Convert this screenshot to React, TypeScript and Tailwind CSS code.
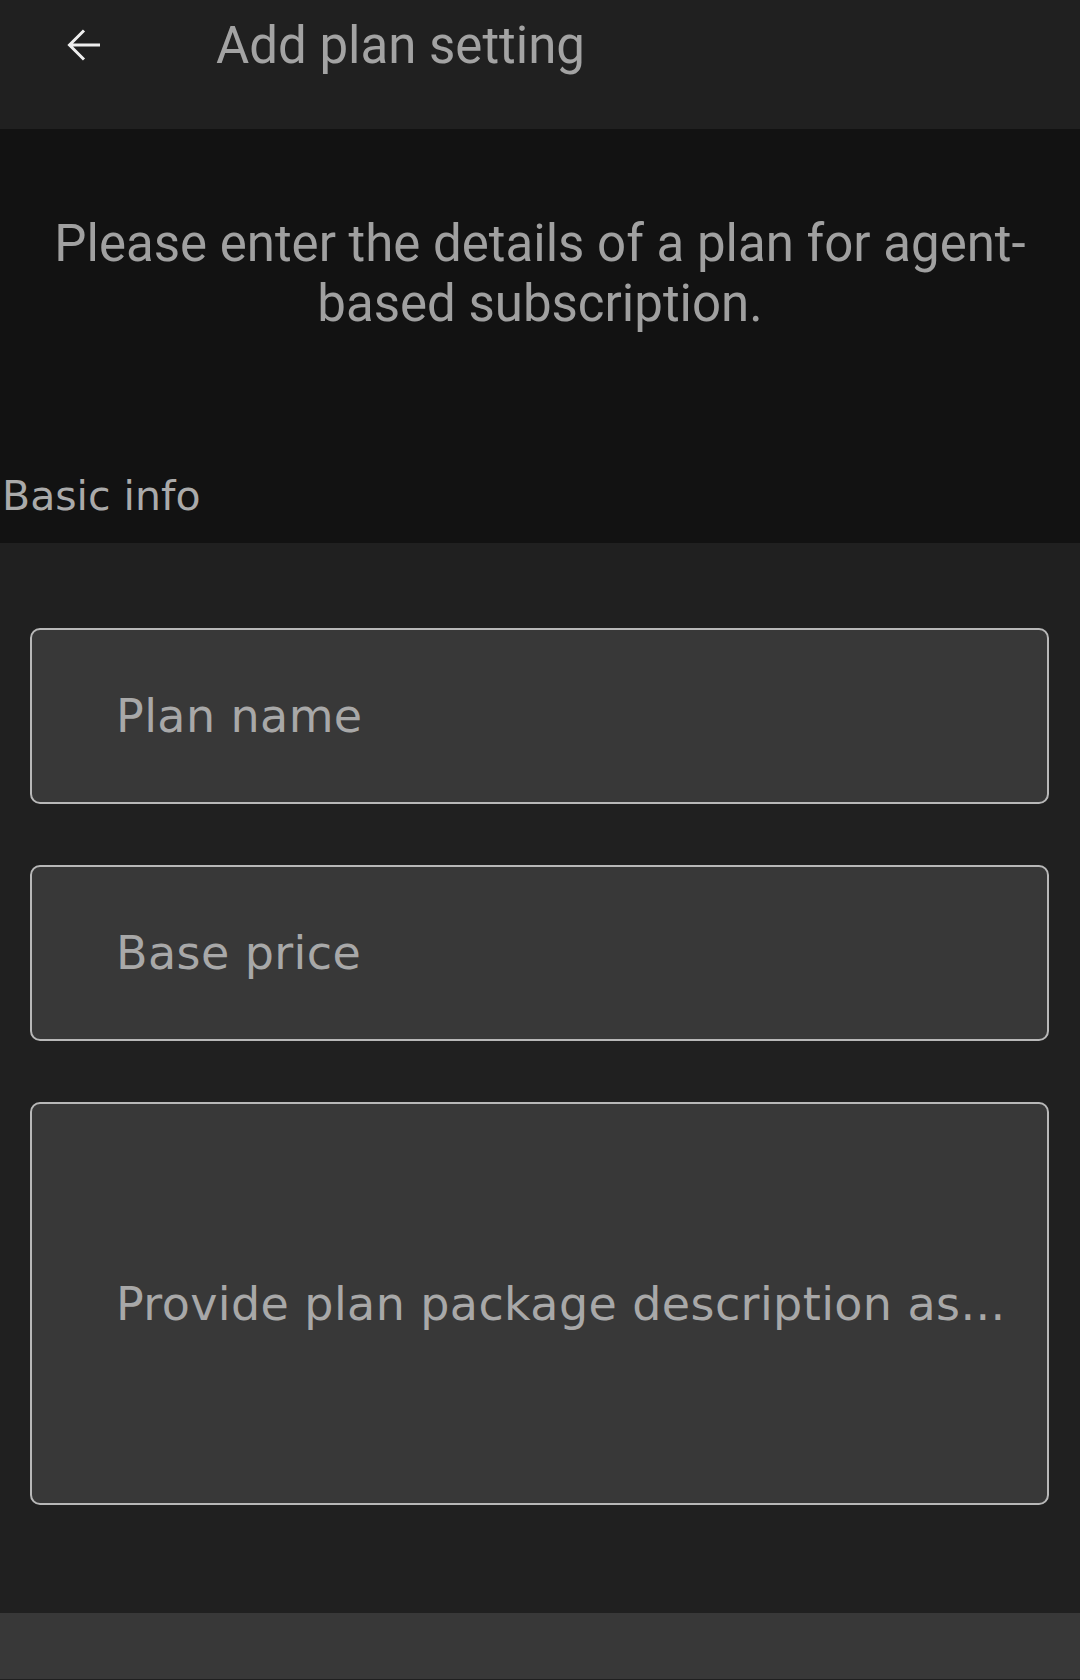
import React from "react";

const boxText = "font-['DejaVu_Sans',sans-serif] text-[46px] tracking-[0.4px] text-[#a8a8a8]";

const Field: React.FC<{ label: string; tall?: boolean }> = ({ label, tall }) => {
  return (
    <div
      className={`flex items-center rounded-[10px] border-2 border-[#b8b8b8] bg-[#383838] pl-[84px] ${
        tall ? "h-[403px]" : "h-[176px]"
      }`}
    >
      <span className={`${boxText} whitespace-nowrap leading-none`}>{label}</span>
    </div>
  );
};

export default function App() {
  return (
    <div className="flex min-h-[1680px] w-[1080px] flex-col bg-[#202020] font-['Roboto',sans-serif]">
      {/* top bar */}
      <header className="h-[129px] bg-[#202020]">
        <div className="flex h-[90px] items-center">
          <button className="ml-[67px] flex h-[34px] w-[34px] items-center justify-center">
            <svg width="34" height="34" viewBox="0 0 34 34" fill="none">
              <path d="M33 17H3M17 2.5L2.5 17L17 31.5" stroke="#eeeeee" strokeWidth="3" />
            </svg>
          </button>
          <h1 className="ml-[115px] text-[51px] leading-none text-[#a3a3a3]">Add plan setting</h1>
        </div>
      </header>

      {/* intro */}
      <section className="flex h-[414px] flex-col justify-between bg-[#121212]">
        <p className="px-[40px] pt-[85px] text-center text-[51px] leading-[60px] text-[#a0a0a0]">
          Please enter the details of a plan for agent-based subscription.
        </p>
        <p className="pb-[23px] pl-[2px] font-['DejaVu_Sans',sans-serif] text-[41px] leading-[48px] text-[#aaaaaa]">
          Basic info
        </p>
      </section>

      {/* form */}
      <section className="flex flex-col gap-[61px] bg-[#202020] pb-[108px] pl-[30px] pr-[31px] pt-[85px]">
        <Field label="Plan name" />
        <Field label="Base price" />
        <Field label="Provide plan package description as..." tall />
      </section>

      <div className="h-[66px] bg-[#383838]" />
    </div>
  );
}
